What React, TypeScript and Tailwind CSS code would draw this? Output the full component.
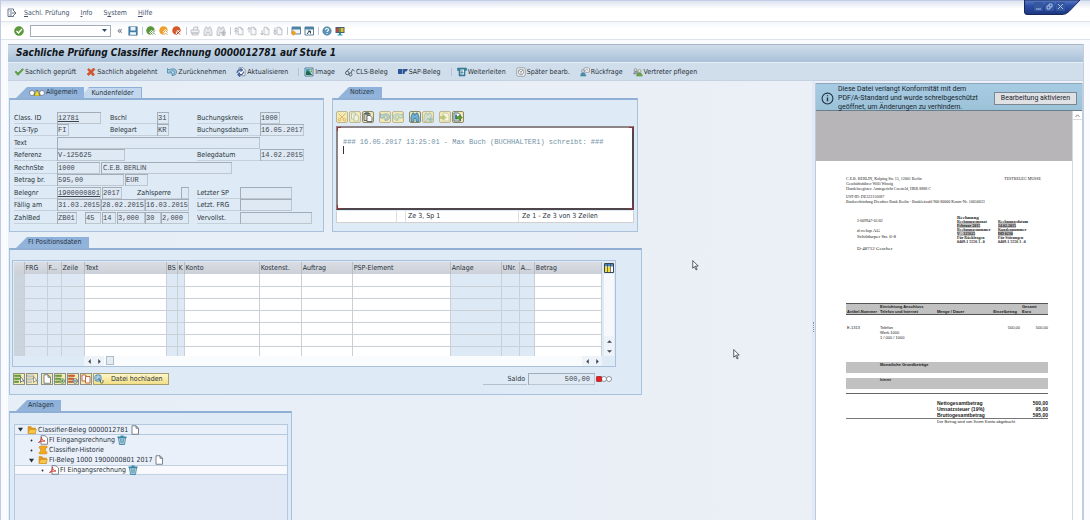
import React from "react";
import clsx from "clsx";

type IconName =
  | "exit" | "check" | "save" | "back" | "up" | "cancel" | "print" | "find" | "findNext"
  | "first" | "prev" | "next" | "last" | "newSession" | "shortcut" | "help" | "monitor"
  | "tick" | "cross" | "undo" | "redo" | "refresh" | "image" | "glasses" | "sap" | "forward"
  | "later" | "question" | "deputy" | "cut" | "copy" | "paste" | "search" | "searchNext" | "load"
  | "export" | "selectAll" | "deselect" | "page" | "insertRow" | "deleteRow" | "duplicate"
  | "upload" | "folder" | "pdf" | "history" | "trash" | "columns";

const pageShape = <path d="M4 1.5h8l5 5v12H4z M12 1.5v5h5" fill="#fff" stroke="#5b6570" strokeWidth="1.6" />;
const fadedPage = (
  <path d="M8 2.5h6l4 4v11H8z M14 2.5v4h4" fill="#f7f8f9" stroke="#b3b8bd" strokeWidth="1.6" />
);
const rowLines = <path d="M1 2h12v3H1zM1 8h10v3H1zM1 14h8v3H1z" />;
const binoculars = (
  <path d="M2 19V10l3-8h3l1 4h2l1-4h3l3 8v9h-6v-6H8v6z" strokeWidth="1.400" />
);

const ICONS: Record<IconName, React.ReactNode> = {
  exit: (
    <g fill="none" stroke="#56677c" strokeWidth="1.800">
      <path d="M13 6V2H2v15h11v-3" />
      <path d="M6 10h12M14 6l4 4-4 4M5 6h5M5 14h5" />
    </g>
  ),
  check: (
    <g>
      <circle cx="10" cy="10" r="9" fill="#5d9c3c" stroke="#48812d" />
      <path d="M5 10l4 4 7-8" fill="none" stroke="#fff" strokeWidth="2.800" />
    </g>
  ),
  save: (
    <g>
      <path d="M1.500 1.500h17v17h-17z" fill="#3e7fa8" stroke="#2d6489" />
      <path d="M5 2h10v7H5z" fill="#e8f1f7" />
      <path d="M4 12h12v6H4z" fill="#c3dbe9" />
      <path d="M5 14h10v2H5z" fill="#fff" />
    </g>
  ),
  back: (
    <g>
      <circle cx="9" cy="9" r="8.500" fill="#58963b" />
      <path d="M13 9l-4 4 4 4M18 9l-4 4 4 4" fill="none" stroke="#fff" strokeWidth="4" />
      <path d="M13 9l-4 4 4 4M18 9l-4 4 4 4" fill="none" stroke="#3f6d2b" strokeWidth="1.600" />
    </g>
  ),
  up: (
    <g>
      <circle cx="9" cy="9" r="8.500" fill="#efa02c" />
      <path d="M9 13l4-4 4 4M9 18l4-4 4 4" fill="none" stroke="#fff" strokeWidth="4" />
      <path d="M9 13l4-4 4 4M9 18l4-4 4 4" fill="none" stroke="#d5841c" strokeWidth="1.600" />
    </g>
  ),
  cancel: (
    <g>
      <circle cx="9" cy="9" r="8.500" fill="#d5582a" />
      <path d="M9 10l7 7M16 10l-7 7" stroke="#fff" strokeWidth="5" />
      <path d="M9 10l7 7M16 10l-7 7" stroke="#b8401b" strokeWidth="2" />
    </g>
  ),
  print: (
    <g fill="#f1f3f5" stroke="#b3b8bd" strokeWidth="1.600">
      <path d="M6 8l2-6h8l-2 6" />
      <path d="M2 8h16v6H2zM4 14h12v4H4z" />
    </g>
  ),
  find: <g fill="#e4e7ea" stroke="#b3b8bd">{binoculars}</g>,
  findNext: (
    <g fill="#e4e7ea" stroke="#b3b8bd">
      {binoculars}
      <path d="M15 9v9M10.500 13.500h9" strokeWidth="2.500" />
    </g>
  ),
  first: <g>{fadedPage}<path d="M4 17V4M1 7l3-4 3 4M1 12l3-4 3 4" fill="none" stroke="#b3b8bd" strokeWidth="1.800" /></g>,
  prev: <g>{fadedPage}<path d="M4 13V3M1 7l3-4 3 4" fill="none" stroke="#b3b8bd" strokeWidth="1.800" /></g>,
  next: <g>{fadedPage}<path d="M4 8v10M1 14l3 4 3-4" fill="none" stroke="#b3b8bd" strokeWidth="1.800" /></g>,
  last: <g>{fadedPage}<path d="M4 3v14M1 13l3 4 3-4M1 8l3 4 3-4" fill="none" stroke="#b3b8bd" strokeWidth="1.800" /></g>,
  newSession: (
    <g>
      <path d="M2 2h17v14H2z" fill="#eef4f8" stroke="#4b7692" strokeWidth="1.800" />
      <path d="M2 2h17v5H2z" fill="#4b83a6" />
      <path d="M5 9v10M0 14h10M2 11l6 6M8 11l-6 6" stroke="#f0a01f" strokeWidth="2.200" />
    </g>
  ),
  shortcut: (
    <g>
      <path d="M2 2h17v16H2z" fill="#fff" stroke="#4b7692" strokeWidth="1.800" />
      <path d="M2 2h17v5H2z" fill="#4b83a6" />
      <path d="M7 16c0-3 1-4 5-5M8 10h5v5" fill="none" stroke="#26333d" strokeWidth="1.800" />
    </g>
  ),
  help: (
    <g>
      <circle cx="10" cy="10" r="8.500" fill="#5b93b8" stroke="#3e7799" />
      <path d="M7 8c0-4 6-4 6 0 0 2-3 2-3 4M10 14v2" fill="none" stroke="#fff" strokeWidth="2.200" />
    </g>
  ),
  monitor: (
    <g>
      <path d="M1 2h18v12H1z" fill="#46606f" />
      <path d="M3 4h5v8H3z" fill="#c8463a" />
      <path d="M8 4h4v8H8z" fill="#53a154" />
      <path d="M12 4h5v8h-5z" fill="#e9bd35" />
      <path d="M8 14h4v3h3v2H5v-2h3z" fill="#2d9bb4" />
    </g>
  ),
  tick: <path d="M2 10l2-2 4 4 9-9 2 2L8 17z" fill="#5ba53c" stroke="#43862a" />,
  cross: <path d="M3 5l3-2 4 4 5-5 3 3-5 5 4 5-3 3-4-5-5 4-3-3 5-4z" fill="#d8532a" stroke="#b6401d" />,
  undo: (
    <path d="M1 3v9h9L7 9c3-2 8-2 8 1s-2 4-5 4v3c6 0 9-3 9-7 0-7-8-8-15-4z" fill="#9fc9e0" stroke="#39789d" strokeWidth="1.400" />
  ),
  redo: (
    <path d="M19 3v9h-9l3-3c-3-2-8-2-8 1s2 4 5 4v3c-6 0-9-3-9-7C1 3 9 2 16 6z" fill="#bcdcdc" stroke="#5f9dab" strokeWidth="1.400" />
  ),
  refresh: (
    <g>
      <path d="M6 1.500h8l4 4v12H6z" fill="#fff" stroke="#5b6f88" strokeWidth="1.400" />
      <path d="M2 12c0-5 4-7 8-6M9 3l4 3-4 3M15 9c0 5-3 7-8 6M8 12l-4 3 4 4" fill="none" stroke="#2e5391" strokeWidth="2.200" />
    </g>
  ),
  image: (
    <g>
      <path d="M2 2h16v16H2z" fill="#e6f0f5" stroke="#426f8b" strokeWidth="1.800" />
      <path d="M4 4h12v7H4z" fill="#3fa3c9" />
      <path d="M4 10l4-3 8 8v1H4z" fill="#1e6a45" />
      <circle cx="13" cy="7" r="2.200" fill="#f4d13d" />
    </g>
  ),
  glasses: (
    <g fill="none" stroke="#45505a" strokeWidth="1.700">
      <circle cx="4.500" cy="12" r="3.500" />
      <circle cx="11" cy="15" r="3" />
      <path d="M3 8l7-5M12 12l3-7 4 3M7 14l1 1" />
    </g>
  ),
  sap: <path d="M0 4h9v10H0zM10 4h10l-3 5h-3l-1 5h-3z" fill="#2b5796" />,
  forward: (
    <g>
      <path d="M1 2h18v5h-3v11H4V7H1z" fill="#3b829e" stroke="#2b6a84" />
      <path d="M7 5h7v10H7z" fill="#e6f1f6" />
      <path d="M10 6v6M8 10l2 3 3-3" fill="none" stroke="#2b6a84" strokeWidth="1.600" />
    </g>
  ),
  later: (
    <g fill="#f3f4f4" stroke="#7f878d" strokeWidth="1.400">
      <rect x="1.500" y="1.500" width="17" height="17" rx="3" />
      <circle cx="10" cy="10" r="5.500" />
      <path d="M5 6l5 4 5-5M10 10v4" fill="none" />
    </g>
  ),
  question: (
    <g>
      <rect x="8" y="1.500" width="11" height="9" rx="2" fill="#f2f4f5" stroke="#7f878d" strokeWidth="1.400" />
      <path d="M11 8c0-4 5-4 5-1" fill="none" stroke="#7f878d" strokeWidth="1.300" />
      <circle cx="6" cy="8" r="3" fill="#d7dde1" stroke="#5f7482" />
      <path d="M1 18l2-6h6l3 6z" fill="#4c8fb1" stroke="#3b7492" />
    </g>
  ),
  deputy: (
    <g>
      <circle cx="5" cy="6" r="3" fill="#cfd4d8" stroke="#6d777e" />
      <path d="M1 14l2-5h6l1 5z" fill="#9ba3a9" stroke="#6d777e" />
      <circle cx="13" cy="8" r="3" fill="#dfe5d8" stroke="#5e7b46" />
      <path d="M7 18l3-6h6l3 6z" fill="#70a848" stroke="#4f8232" />
    </g>
  ),
  cut: (
    <g fill="none" stroke="#d9952a" strokeWidth="2">
      <path d="M3 3l11 11M17 3L6 14" />
      <circle cx="5" cy="15.500" r="2.500" />
      <circle cx="15" cy="15.500" r="2.500" />
    </g>
  ),
  copy: (
    <g fill="#f6faf4" stroke="#7ba3a4" strokeWidth="1.600">
      <path d="M3 2h8v12H3z" />
      <path d="M8 6h6l3 3v9H8z" />
    </g>
  ),
  paste: (
    <g stroke="#4b5963" strokeWidth="1.700">
      <path d="M2 3h12v14H2z" fill="#d5cfb2" />
      <path d="M5 1.500h6v3H5z" fill="#68767f" />
      <path d="M8 7h6l4 4v8H8z" fill="#fff" />
    </g>
  ),
  search: <g fill="#6fb0d6" stroke="#2c6c96">{binoculars}</g>,
  searchNext: (
    <g fill="#c3dbe0" stroke="#6f9fae">
      {binoculars}
      <path d="M15 10v9M10.500 14.500h9" strokeWidth="2.500" />
    </g>
  ),
  load: (
    <g>
      <path d="M6 2h8l4 4v12H6z" fill="#fbfcf2" stroke="#a1a98d" strokeWidth="1.400" />
      <path d="M1 9h6V6l5 5-5 5v-3H1z" fill="#97bb55" stroke="#7a993f" />
    </g>
  ),
  export: (
    <g>
      <path d="M2 2h9l4 4v12H2z" fill="#fff" stroke="#3e627c" strokeWidth="1.800" />
      <path d="M4 5h4v10H4z" fill="#4484a8" />
      <path d="M7 9h5V6l7 5-7 6v-3H7z" fill="#5b9c3b" stroke="#3b7423" />
    </g>
  ),
  selectAll: (
    <g>
      <g fill="#62a83f" stroke="#44803a">{rowLines}</g>
      <path d="M13 5v12l3-3h4z" fill="#fff" stroke="#44525c" strokeWidth="1.400" />
    </g>
  ),
  deselect: (
    <g>
      <g fill="#e2e5e6" stroke="#8e969b">{rowLines}</g>
      <path d="M13 5v12l3-3h4z" fill="#fff" stroke="#6a747b" strokeWidth="1.400" />
    </g>
  ),
  page: pageShape,
  insertRow: (
    <g>
      <g fill="#72ab4c" stroke="#547f3d">{rowLines}</g>
      <circle cx="14.500" cy="14" r="4.500" fill="#fff" stroke="#3f7d2d" strokeWidth="1.500" />
      <path d="M14.500 11v6M11.500 14h6" stroke="#3f7d2d" strokeWidth="1.800" />
    </g>
  ),
  deleteRow: (
    <g>
      <g fill="#d9633c" stroke="#a3452f">{rowLines}</g>
      <circle cx="14.500" cy="14" r="4.500" fill="#fff" stroke="#3c464d" strokeWidth="1.500" />
      <path d="M11.500 14h6" stroke="#3c464d" strokeWidth="2" />
    </g>
  ),
  duplicate: (
    <g fill="#fff" stroke="#b9542f" strokeWidth="1.700">
      <path d="M2 2h8v12H2z" />
      <path d="M9 5h9v13H9z" />
    </g>
  ),
  upload: (
    <g>
      <circle cx="8" cy="8" r="7" fill="#6ba3c9" stroke="#35709b" />
      <path d="M1 6h14M1 10h14M8 1v14" stroke="#e3f0f8" strokeWidth="1.400" />
      <path d="M7 12c0-3 6-3 6 0v5c0 2 5 2 5-1v-4" fill="none" stroke="#4a6478" strokeWidth="1.800" />
    </g>
  ),
  folder: (
    <g stroke="#c98a17">
      <path d="M2 17V3h6l2 3h7v11z" fill="#e19a20" />
      <path d="M2 17l3-8h14l-3 8z" fill="#f8c64b" />
    </g>
  ),
  pdf: (
    <g>
      <path d="M6 1.500h8l5 4.500v12.500H6z" fill="#fff" stroke="#59636b" strokeWidth="1.500" />
      <path d="M1 15c5-2 6-7 6-11 0 5 3 8 7 8-5 0-9 1-13 3z" fill="none" stroke="#d0352a" strokeWidth="1.800" />
    </g>
  ),
  history: (
    <path d="M5 2h12c2 0 2 4 0 4h-2v7h2c2 0 2 5-1 5H4c-3 0-3-4 0-4h1V7H4C1 7 2 2 5 2z" fill="#f3a820" stroke="#c98315" />
  ),
  trash: (
    <g>
      <path d="M3 6h14l-2 13H5z" fill="#cfe5ee" stroke="#2c7797" strokeWidth="1.600" />
      <path d="M1 3h18v3H1zM7 1h6v2H7z" fill="#3987a6" />
      <path d="M7 8l1 9M10 8v9M13 8l-1 9" stroke="#2c7797" strokeWidth="1.400" />
    </g>
  ),
  columns: (
    <g>
      <path d="M1 1h18v18H1z" fill="#fff" stroke="#3a4650" strokeWidth="2" />
      <path d="M2 2h16v5H2z" fill="#4b86c0" />
      <path d="M2 7h10v11H2z" fill="#f5e13a" />
      <path d="M7 2v17M13 2v17" stroke="#3a4650" strokeWidth="1.400" />
    </g>
  ),
};

function Icon({ name, className }: { name: IconName; className?: string }) {
  return (
    <svg viewBox="0 0 20 20" className={clsx("size-[10px] shrink-0", className)} aria-hidden="true">
      {ICONS[name]}
    </svg>
  );
}

const MENUS = [
  { key: "S", rest: "achl. Prüfung" },
  { key: "I", rest: "nfo" },
  { pre: "S", key: "y", rest: "stem" },
  { key: "H", rest: "ilfe" },
];

const SYSTEM_GROUPS: { name: IconName; label: string }[][] = [
  [
    { name: "back", label: "Zurück" },
    { name: "up", label: "Beenden" },
    { name: "cancel", label: "Abbrechen" },
  ],
  [
    { name: "print", label: "Drucken" },
    { name: "find", label: "Suchen" },
    { name: "findNext", label: "Weitersuchen" },
  ],
  [
    { name: "first", label: "Erste Seite" },
    { name: "prev", label: "Vorige Seite" },
    { name: "next", label: "Nächste Seite" },
    { name: "last", label: "Letzte Seite" },
  ],
  [
    { name: "newSession", label: "Neuer Modus" },
    { name: "shortcut", label: "Verknüpfung" },
  ],
  [
    { name: "help", label: "Hilfe" },
    { name: "monitor", label: "Layout anpassen" },
  ],
];

const ACTION_GROUPS: { icon: IconName; label: string }[][] = [
  [
    { icon: "tick", label: "Sachlich geprüft" },
    { icon: "cross", label: "Sachlich abgelehnt" },
    { icon: "undo", label: "Zurücknehmen" },
    { icon: "refresh", label: "Aktualisieren" },
  ],
  [
    { icon: "image", label: "Image" },
    { icon: "glasses", label: "CLS-Beleg" },
    { icon: "sap", label: "SAP-Beleg" },
  ],
  [
    { icon: "forward", label: "Weiterleiten" },
    { icon: "later", label: "Später bearb." },
    { icon: "question", label: "Rückfrage" },
    { icon: "deputy", label: "Vertreter pflegen" },
  ],
];

const NOTE_TOOLS: { icon: IconName; label: string; off?: boolean }[][] = [
  [
    { icon: "cut", label: "Ausschneiden", off: true },
    { icon: "copy", label: "Kopieren", off: true },
    { icon: "paste", label: "Einfügen" },
  ],
  [
    { icon: "undo", label: "Rückgängig", off: true },
    { icon: "redo", label: "Wiederholen", off: true },
  ],
  [
    { icon: "search", label: "Suchen" },
    { icon: "searchNext", label: "Weitersuchen", off: true },
  ],
  [
    { icon: "load", label: "Laden", off: true },
    { icon: "export", label: "Sichern als" },
  ],
];

const ROW_TOOLS: { icon: IconName; label: string }[] = [
  { icon: "selectAll", label: "Alle markieren" },
  { icon: "deselect", label: "Markierung löschen" },
  { icon: "page", label: "Anlegen" },
  { icon: "insertRow", label: "Zeile einfügen" },
  { icon: "deleteRow", label: "Zeile löschen" },
  { icon: "duplicate", label: "Zeile kopieren" },
];

const COLUMNS = [
  { title: "", width: "w-[10px]", cell: "bg-[#cbd3dc]" },
  { title: "FRG", width: "w-[23px]", cell: "bg-[#dde8f4]" },
  { title: "F...", width: "w-[14px]", cell: "bg-[#dde8f4]" },
  { title: "Zeile", width: "w-[23px]", cell: "bg-[#dde8f4]" },
  { title: "Text", width: "w-[82px]", cell: "bg-white" },
  { title: "BS", width: "w-[11px]", cell: "bg-[#dde9f4]" },
  { title: "K", width: "w-[7px]", cell: "bg-[#dde9f4]" },
  { title: "Konto", width: "w-[75px]", cell: "bg-white" },
  { title: "Kostenst.", width: "w-[42px]", cell: "bg-white" },
  { title: "Auftrag", width: "w-[51px]", cell: "bg-white" },
  { title: "PSP-Element", width: "w-[98px]", cell: "bg-white" },
  { title: "Anlage", width: "w-[51px]", cell: "bg-[#dde9f4]" },
  { title: "UNr.", width: "w-[18px]", cell: "bg-[#dde9f4]" },
  { title: "A...", width: "w-[15px]", cell: "bg-[#dde9f4]" },
  { title: "Betrag", width: "w-[67px]", cell: "bg-white" },
];

const TREE: { text: string; icon: IconName; tail?: IconName; indent: string; open?: boolean; row?: string }[] = [
  { text: "Classifier-Beleg 0000012781", icon: "folder", tail: "page", indent: "pl-[3px]", open: true, row: "border-b border-[#b4c8de]" },
  { text: "FI Eingangsrechnung", icon: "pdf", tail: "trash", indent: "pl-[14px]" },
  { text: "Classifier-Historie", icon: "history", indent: "pl-[14px]" },
  { text: "FI-Beleg 1000 1900000801 2017", icon: "folder", tail: "page", indent: "pl-[14px]", open: true },
  { text: "FI Eingangsrechnung", icon: "pdf", tail: "trash", indent: "pl-[25px]", row: "border-y border-[#c2d1e2] bg-[#f7f9fd]" },
];

function Field({
  id,
  label,
  value = "",
  className,
}: {
  id?: string;
  label?: string;
  value?: string;
  className: string;
}) {
  return (
    <input
      id={id}
      aria-label={label}
      defaultValue={value}
      className={clsx(
        "h-[12px] shrink-0 bg-[#dfe9f3] pl-px font-['Liberation_Mono',monospace] text-[7px] leading-[12px] text-[#3c4650] outline-none",
        "shadow-[inset_1px_1px_0_#a3adb8,inset_-1px_-1px_0_#bcc6d0]",
        className
      )}
    />
  );
}

function Caption({ htmlFor, className, children }: { htmlFor: string; className: string; children: string }) {
  return (
    <label
      htmlFor={htmlFor}
      className={clsx("h-[12px] shrink-0 border-b border-[#c6d0db] leading-[12px]", className)}
    >
      {children}
    </label>
  );
}

function Lights({ state }: { state: "yellow" | "red" }) {
  return (
    <svg viewBox="0 0 32 12" className="h-[6px] w-4 shrink-0" aria-hidden="true">
      <circle cx="6" cy="6" r="5" fill="#fff" stroke="#535c64" strokeWidth="1.200" />
      <circle cx="16" cy="6" r="5" fill="#fff" stroke="#535c64" strokeWidth="1.200" />
      <circle cx="26" cy="6" r="5" fill="#fff" stroke="#535c64" strokeWidth="1.200" />
      {state === "yellow" && <path d="M16 0l6 12H10z" fill="#f5de2a" stroke="#4a4a20" />}
      {state === "red" && <path d="M1 1h10v10H1z" fill="#f21b1b" stroke="#7c1616" />}
    </svg>
  );
}

function Tab({ children, className }: { children: React.ReactNode; className?: string }) {
  return (
    <button
      type="button"
      className={clsx(
        "flex h-[11px] items-center gap-px bg-linear-to-b from-[#8db1dc] to-[#93b4da] leading-[11px] [clip-path:polygon(11px_0,100%_0,100%_100%,0_100%)]",
        className
      )}
    >
      {children}
    </button>
  );
}

const panelBox = "border border-t-2 border-[#a9c1da] border-t-[#8fafd4] bg-[#deeaf5]";

function WindowControls() {
  return (
    <div className="absolute top-0 right-[9px] h-[15px] w-[57px]">
      <svg viewBox="0 0 57 15" className="absolute inset-0 size-full" aria-hidden="true">
        <defs>
          <linearGradient id="caption" x1="0" y1="0" x2="0" y2="1">
            <stop offset="0" stopColor="#5d7cc6" />
            <stop offset="0.4" stopColor="#2c4fa6" />
            <stop offset="1" stopColor="#1d3680" />
          </linearGradient>
        </defs>
        <path d="M0.500 0v12q0 2.500 2.500 2.500h35q4 0 7-3L56 0z" fill="url(#caption)" stroke="#16285c" />
      </svg>
      <div className="relative flex gap-[2px] pt-[2px] pl-[10px] text-[#a8bfed]">
        {[
          { label: "Minimieren", d: "M2 7h5" },
          { label: "Wiederherstellen", d: "M2 4h3v3H2zM4 4V2h3v3H5" },
          { label: "Schließen", d: "M2 2l5 5M7 2l-5 5" },
        ].map((b) => (
          <button key={b.label} type="button" aria-label={b.label} className="size-[9px] rounded-[1px] bg-[#35589f]">
            <svg viewBox="0 0 9 9" className="size-[9px]" fill="none" stroke="currentColor">
              <path d={b.d} />
            </svg>
          </button>
        ))}
      </div>
    </div>
  );
}

function MenuBar() {
  return (
    <nav className="flex h-[22px] items-center gap-[11px] border-t border-b border-t-[#c3cfe4] border-b-[#dfe4ea] bg-linear-to-b from-[#dde3f1] to-white to-40% pt-1 pl-[6px] text-[#44536b]">
      <Icon name="exit" className="-mr-1" />
      {MENUS.map((m) => (
        <button key={m.rest} type="button">
          {m.pre}
          <span className="underline">{m.key}</span>
          {m.rest}
        </button>
      ))}
    </nav>
  );
}

function SystemToolbar() {
  return (
    <div className="flex h-[18px] items-center border-b border-[#dfe4ea] bg-linear-to-b from-[#f3f7fb] to-white to-40% pl-[13px]">
      <button type="button" aria-label="Weiter">
        <Icon name="check" />
      </button>
      <div className="ml-[6px] flex h-[12px] w-[81px] items-center border border-[#a2abb8] bg-white pr-[3px]">
        <select aria-label="Transaktion" className="h-full min-w-0 flex-1 appearance-none outline-none" defaultValue="">
          <option value=""></option>
        </select>
        <svg viewBox="0 0 10 6" className="h-[3px] w-[5px] shrink-0" aria-hidden="true">
          <path d="M0 0h10L5 6z" fill="#2c4a6b" />
        </svg>
      </div>
      <button type="button" aria-label="Befehlsfeld ausblenden" className="ml-[6px] text-[10px] leading-none text-[#49535d]">
        «
      </button>
      <button type="button" aria-label="Sichern" className="ml-[5px]">
        <Icon name="save" />
      </button>
      {SYSTEM_GROUPS.map((group, i) => (
        <div key={i} className="flex items-center gap-[3px] pl-[4px]">
          <span className="h-[8px] w-px shrink-0 bg-[#b9c9d9]" />
          {group.map((b) => (
            <button key={b.name} type="button" aria-label={b.label}>
              <Icon name={b.name} />
            </button>
          ))}
        </div>
      ))}
    </div>
  );
}

function ActionToolbar() {
  return (
    <div className="flex h-[19px] items-center gap-[10px] border-t border-b border-t-[#e6eef6] border-b-[#c5d0e2] bg-[#d0deeb] pl-[6px]">
      {ACTION_GROUPS.map((group, i) => (
        <React.Fragment key={i}>
          {i > 0 && <span className="-mr-[5px] h-[8px] w-px bg-[#b3c3d5]" />}
          {group.map((a) => (
            <button key={a.label} type="button" className="flex items-center gap-px whitespace-nowrap">
              <Icon name={a.icon} />
              {a.label}
            </button>
          ))}
        </React.Fragment>
      ))}
    </div>
  );
}

function GeneralPanel() {
  return (
    <section className="w-[315px] shrink-0">
      <div className="flex pl-[7px]">
        <Tab className="w-[68px] pl-[13px]">
          <Lights state="yellow" />
          Allgemein
        </Tab>
        <button
          type="button"
          className="h-[11px] w-[58px] border-t border-r border-[#8fb0d6] bg-[#c3d8ee] leading-[10px] [clip-path:polygon(5px_0,100%_0,100%_100%,0_100%,0_6px)]"
        >
          Kundenfelder
        </button>
      </div>
      <div className={clsx(panelBox, "h-[134px] pt-[12px] pl-[4px]")}>
        <div className="grid h-[112px] grid-rows-9">
          <div className="flex">
            <Caption htmlFor="class-id" className="w-[43px]">Class. ID</Caption>
            <Field id="class-id" value="12781" className="w-[44px] underline" />
            <Caption htmlFor="bschl" className="ml-[9px] w-[47px]">Bschl</Caption>
            <Field id="bschl" value="31" className="w-[12px]" />
            <Caption htmlFor="bukrs" className="ml-[28px] w-[63px]">Buchungskreis</Caption>
            <Field id="bukrs" value="1000" className="w-[20px]" />
          </div>
          <div className="flex">
            <Caption htmlFor="cls-typ" className="w-[43px]">CLS-Typ</Caption>
            <Field id="cls-typ" value="FI" className="w-[12px]" />
            <Caption htmlFor="belegart" className="ml-[41px] w-[47px]">Belegart</Caption>
            <Field id="belegart" value="KR" className="w-[12px]" />
            <Caption htmlFor="budat" className="ml-[28px] w-[63px]">Buchungsdatum</Caption>
            <Field id="budat" value="16.05.2017" className="w-[44px]" />
          </div>
          <div className="flex">
            <Caption htmlFor="text" className="w-[43px]">Text</Caption>
            <Field id="text" className="w-[203px]" />
          </div>
          <div className="flex">
            <Caption htmlFor="referenz" className="w-[43px]">Referenz</Caption>
            <Field id="referenz" value="V-125625" className="w-[68px]" />
            <Caption htmlFor="bldat" className="ml-[72px] w-[63px]">Belegdatum</Caption>
            <Field id="bldat" value="14.02.2015" className="w-[44px]" />
          </div>
          <div className="flex">
            <Caption htmlFor="rechnste" className="w-[43px]">RechnSte</Caption>
            <Field id="rechnste" value="1000" className="w-[43px]" />
            <input
              aria-label="Name Rechnungssteller"
              defaultValue="C.E.B. BERLIN"
              className="ml-px h-[12px] w-[131px] bg-[#dfe9f3] pl-[2px] leading-[12px] text-[#3c4650] shadow-[inset_1px_1px_0_#a3adb8,inset_-1px_-1px_0_#bcc6d0] outline-none"
            />
          </div>
          <div className="flex gap-px">
            <Caption htmlFor="betrag" className="-mr-px w-[43px]">Betrag br.</Caption>
            <Field id="betrag" value="595,00" className="w-[67px]" />
            <Field label="Währung" value="EUR" className="w-[23px]" />
          </div>
          <div className="flex">
            <Caption htmlFor="belegnr" className="w-[43px]">Belegnr</Caption>
            <Field id="belegnr" value="1900000801" className="w-[44px] underline" />
            <Field label="Geschäftsjahr" value="2017" className="ml-px w-[20px]" />
            <Caption htmlFor="sperre" className="ml-[15px] w-[44px]">Zahlsperre</Caption>
            <Field id="sperre" className="w-[8px]" />
            <Caption htmlFor="letzter-sp" className="ml-[8px] w-[43px]">Letzter SP</Caption>
            <Field id="letzter-sp" className="w-[52px]" />
          </div>
          <div className="flex">
            <Caption htmlFor="faellig" className="w-[43px]">Fällig am</Caption>
            <Field id="faellig" value="31.03.2015" className="w-[44px]" />
            <Field label="Skonto 1 bis" value="28.02.2015" className="w-[44px]" />
            <Field label="Skonto 2 bis" value="16.03.2015" className="w-[44px]" />
            <Caption htmlFor="letzt-frg" className="ml-[8px] w-[43px]">Letzt. FRG</Caption>
            <Field id="letzt-frg" className="w-[52px]" />
          </div>
          <div className="flex">
            <Caption htmlFor="zahlbed" className="w-[43px]">ZahlBed</Caption>
            <Field id="zahlbed" value="ZB01" className="w-[20px]" />
            <Field label="Tage 1" value="45" className="ml-2 w-[16px] pl-[3px]" />
            <Field label="Tage 2" value="14" className="ml-px w-[14px] pl-[3px]" />
            <Field label="Prozent 1" value="3,000" className="ml-px w-[28px] pl-[3px]" />
            <Field label="Tage netto" value="30" className="w-[16px] pl-[3px]" />
            <Field label="Prozent 2" value="2,000" className="w-[28px] pl-[3px]" />
            <Caption htmlFor="vervollst" className="ml-[8px] w-[43px]">Vervollst.</Caption>
            <Field id="vervollst" className="w-[72px]" />
          </div>
        </div>
      </div>
    </section>
  );
}

function NotesPanel() {
  return (
    <section className="w-[306px] shrink-0">
      <div className="flex pl-[6px]">
        <Tab className="w-[44px] pl-[12px]">Notizen</Tab>
      </div>
      <div className={clsx(panelBox, "h-[134px] px-[3px] pt-[11px]")}>
        <div className="flex gap-[5px]">
          {NOTE_TOOLS.map((group, i) => (
            <div key={i} className="flex gap-px">
              {group.map((t) => (
                <button
                  key={t.label}
                  type="button"
                  aria-label={t.label}
                  className={clsx(
                    "flex size-[12px] items-center justify-center rounded-[2px] border bg-[#f2e9b5]",
                    t.off ? "border-[#bdb794]" : "border-[#8f8963]"
                  )}
                >
                  <Icon name={t.icon} className={t.off ? "opacity-60" : undefined} />
                </button>
              ))}
            </div>
          ))}
        </div>
        <div className="relative mt-[3px]">
          <textarea
            aria-label="Notizen"
            readOnly
            value={"\n### 16.05.2017 13:25:01 - Max Buch (BUCHHALTER1) schreibt: ###\n"}
            className="block h-[84px] w-full resize-none overflow-hidden border-2 border-[#8b8588] border-r-[#4e464a] border-b-[#4e464a] bg-white px-[5px] py-[1px] font-['Liberation_Mono',monospace] text-[7px] leading-[9px] text-[#7392a5] outline-none"
          />
          <span className="absolute top-[20px] left-[7px] h-[8px] w-px bg-[#333]" />
          <span className="absolute top-px left-px size-[4px] border-t border-l border-[#9d2f36]" />
          <span className="absolute top-px right-px size-[4px] border-t border-r border-[#9d2f36]" />
          <span className="absolute bottom-px left-px size-[4px] border-b border-l border-[#9d2f36]" />
          <span className="absolute right-px bottom-px size-[4px] border-r border-b border-[#9d2f36]" />
        </div>
        <div className="mt-px flex h-[12px] border border-t-0 border-[#d3cfcf] bg-white leading-[11px]">
          <span className="w-[60px] border-r border-[#dcdfe3]" />
          <span className="w-[9px] border-r border-[#dcdfe3]" />
          <span className="w-[113px] border-r border-[#dcdfe3] pl-[2px]">Ze 3, Sp 1</span>
          <span className="pl-[3px]">Ze 1 - Ze 3 von 3 Zeilen</span>
        </div>
      </div>
    </section>
  );
}

function Arrow({ d, label }: { d: string; label: string }) {
  return (
    <button type="button" aria-label={label} className="flex size-[10px] items-center justify-center bg-[#eef3f9]">
      <svg viewBox="0 0 8 8" className="size-[5px]" aria-hidden="true">
        <path d={d} fill="#3c4650" />
      </svg>
    </button>
  );
}

function PositionsPanel() {
  return (
    <section className="mt-[5px] w-[633px]">
      <div className="flex pl-[7px]">
        <Tab className="w-[73px] pl-[12px]">FI Positionsdaten</Tab>
      </div>
      <div className={clsx(panelBox, "h-[147px] pt-[10px] pl-[2px]")}>
        <div className="w-[604px] border border-[#a9c1da] p-px pb-0">
          <div className="flex">
            <table className="w-[588px] table-fixed border-collapse">
              <thead>
                <tr className="h-[12px] bg-linear-to-b from-[#dadde3] to-[#ccd0d8]">
                  {COLUMNS.map((c, i) => (
                    <th
                      key={i}
                      className={clsx(
                        "overflow-hidden border-r border-[#b6bec8] p-0 pl-px text-left leading-[11px] font-normal whitespace-nowrap",
                        c.width
                      )}
                    >
                      {c.title}
                    </th>
                  ))}
                </tr>
              </thead>
              <tbody>
                {Array.from({ length: 7 }, (_, r) => (
                  <tr key={r} className={r < 6 ? "h-[12px]" : "h-[10px]"}>
                    {COLUMNS.map((c, i) => (
                      <td key={i} className={clsx("border-r border-[#c9d0d8] p-0", r < 6 && "border-b", c.cell)} />
                    ))}
                  </tr>
                ))}
              </tbody>
            </table>
            <div className="ml-[2px] flex w-[10px] flex-col">
              <button type="button" aria-label="Spalten einstellen" className="h-[12px]">
                <Icon name="columns" />
              </button>
              <div className="flex-1 bg-[#f6f8fb]" />
              <Arrow label="Nach oben" d="M0 6h8L4 2z" />
              <Arrow label="Nach unten" d="M0 2h8L4 6z" />
            </div>
          </div>
          <div className="flex h-[10px] w-[588px] bg-linear-to-r from-[#deeaf5] from-12% to-[#f9fbfd] to-12% pl-[70px]">
            <Arrow label="Spalte links" d="M6 0v8L2 4z" />
            <Arrow label="Spalte rechts" d="M2 0v8l4-4z" />
            <span className="ml-[2px] h-[9px] w-[8px] border border-[#aebccb] bg-[#e4ecf4]" />
            <span className="flex-1" />
            <Arrow label="Seite links" d="M6 0v8L2 4z" />
            <Arrow label="Seite rechts" d="M2 0v8l4-4z" />
          </div>
        </div>
        <div className="mt-[6px] flex items-center gap-px pl-px">
          {ROW_TOOLS.map((t) => (
            <button
              key={t.icon}
              type="button"
              aria-label={t.label}
              className={clsx(
                "flex size-[12px] items-center justify-center border border-[#8f9184] bg-[#f5ebb0]",
                t.icon === "page" && "ml-[2px]"
              )}
            >
              <Icon name={t.icon} />
            </button>
          ))}
          <button
            type="button"
            className="flex h-[12px] w-[76px] items-center border border-[#a89f70] bg-linear-to-b from-[#fdf6c8] to-[#f3df86] leading-[10px] whitespace-nowrap"
          >
            <Icon name="upload" />
            <span className="ml-[7px]">Datei hochladen</span>
          </button>
          <label htmlFor="saldo" className="ml-[313px] h-[12px] w-[44px] border-b border-[#b5c0cc] pr-[2px] text-right leading-[12px]">
            Saldo
          </label>
          <Field id="saldo" value="500,00" className="w-[67px] pr-[5px] text-right" />
          <Lights state="red" />
        </div>
      </div>
    </section>
  );
}

function AttachmentsPanel() {
  return (
    <section className="mt-[5px] flex w-[283px] flex-1 flex-col">
      <div className="flex pl-[7px]">
        <Tab className="w-[45px] pl-[12px]">Anlagen</Tab>
      </div>
      <div className={clsx(panelBox, "flex flex-1 flex-col border-b-0 pt-[11px] pr-[3px] pl-[4px]")}>
        <ul className="flex-1 border border-b-0 border-[#b4c8de] bg-linear-to-b from-[#eaf0fa] from-50% to-[#e1e9f6] to-50%">
          {TREE.map((n, i) => (
            <li key={i} className={clsx("flex h-[10px] items-center gap-px", n.indent, n.row)}>
              <svg viewBox="0 0 8 8" className="mr-[3px] size-[5px] shrink-0" aria-hidden="true">
                {n.open ? <path d="M0 1h8L4 7z" fill="#222b33" /> : <circle cx="4" cy="4" r="1.500" fill="#222b33" />}
              </svg>
              <Icon name={n.icon} />
              <span>{n.text}</span>
              {n.tail && <Icon name={n.tail} className="ml-px" />}
            </li>
          ))}
        </ul>
      </div>
    </section>
  );
}

function InvoiceMeta({ rows }: { rows: string[] }) {
  return (
    <dl className="text-[4px] leading-[4px] font-bold">
      {rows.map((r, i) =>
        i % 2 === 0 ? (
          <dt key={i}>{r}</dt>
        ) : (
          <dd key={i}>
            <span className={i < 5 ? "bg-[#bdbdbd]" : ""}>{r}</span>
          </dd>
        )
      )}
    </dl>
  );
}

function Invoice() {
  return (
    <article className="flex-1 bg-white pt-[15px] pr-[24px] pl-[30px] font-['Liberation_Serif',serif] text-[4px] leading-[5px] text-[#222]">
      <header className="flex justify-between pr-[7px]">
        <div className="whitespace-nowrap">
          <p>C.E.B. BERLIN, Kolping Str. 15, 12001 Berlin</p>
          <p>Geschäftsführer Willi Winzig</p>
          <p>Handelsregister: Amtsgericht Coesfeld, HRB 8888 C</p>
          <p className="mt-[3px]">UST-ID: DE322156687</p>
          <p>Bankverbindung Dresdner Bank Berlin - Bankleitzahl 900 80000 Konto-Nr. 10050033</p>
        </div>
        <p>TESTBELEG MUSSE</p>
      </header>
      <div className="mt-[11px] flex">
        <address className="w-[111px] pt-[3px] pl-[11px] text-[5px] leading-[6px] not-italic">
          <p className="mb-[5px] text-[4px] leading-[5px]">2-009947-01/02</p>
          <p>d.velop AG</p>
          <p>Schildarper Str. 6-8</p>
          <p className="mt-[6px]">D-48712 Gescher</p>
        </address>
        <div>
          <h2 className="text-[5px] leading-[5px] font-bold">Rechnung</h2>
          <div className="flex">
            <div className="w-[41px]">
              <InvoiceMeta rows={["Rechnungsmonat", "Februar 2015", "Rechnungsnummer", "V - 125625", "Für Rückfragen", "0409-1 5556 1 -0"]} />
            </div>
            <InvoiceMeta rows={["Rechnungsdatum", "14.02.2015", "Kundennummer", "DD 0230", "Für Störungen", "0409-1 5556 1 -0"]} />
          </div>
        </div>
      </div>
      <div className="mt-[51px] font-['Liberation_Sans',sans-serif]">
        <table className="w-full table-fixed border-collapse text-left align-top">
          <thead>
            <tr className="border-y border-[#555] bg-[#c1c1c1] align-bottom">
              <th className="w-[34px] p-0 pl-px whitespace-nowrap">Artikel-Nummer</th>
              <th className="w-[57px] p-0 whitespace-nowrap">
                Einrichtung Anschluss
                <br />
                Telefon und Internet
              </th>
              <th className="p-0">Menge / Dauer</th>
              <th className="w-[30px] p-0 pr-[3px] text-right">Einzelbetrag</th>
              <th className="w-[28px] p-0 pl-[2px]">
                Gesamt
                <br />
                Euro
              </th>
            </tr>
          </thead>
          <tbody>
            <tr className="align-top">
              <td className="p-0 pt-[10px] pl-px">E-1313</td>
              <td className="p-0 pt-[10px]">
                Telefon
                <br />
                Werk 1000
                <br />
                1 / 000 / 1000
              </td>
              <td className="p-0" />
              <td className="p-0 pt-[10px] text-right">500,00</td>
              <td className="p-0 pt-[10px] text-right">500,00</td>
            </tr>
          </tbody>
        </table>
        <h3 className="mt-[22px] h-[11px] bg-[#c1c1c1] pl-[34px] font-bold">Monatliche Grundbeträge</h3>
        <h3 className="mt-[5px] h-[11px] bg-[#c1c1c1] pl-[34px] text-[3px] font-bold">Internet</h3>
        <dl className="mt-1 grid grid-cols-[1fr_auto] border-t border-b border-t-[#666] border-b-[#777] pt-[6px] pl-[91px] text-[5px] leading-[6px] font-bold">
          <dt>Nettogesamtbetrag</dt>
          <dd>500,00</dd>
          <dt>Umsatzsteuer (19%)</dt>
          <dd className="text-right">95,00</dd>
          <dt>Bruttogesamtbetrag</dt>
          <dd>595,00</dd>
        </dl>
        <p className="pl-[91px] whitespace-nowrap">Der Betrag wird von Ihrem Konto abgebucht</p>
      </div>
    </article>
  );
}

function PdfViewer() {
  return (
    <aside className="mt-[2px] flex w-[268px] shrink-0 flex-col border-r border-l border-r-[#c3cde0] border-l-[#bccbdb] bg-white">
      <div className="flex h-[28px] items-center border-y border-t-[#8ba9bd] border-b-[#697f8d] bg-linear-to-b from-[#a7cbe3] to-[#9cc2d8] pt-[2px] pr-[5px] pl-[5px] font-['Roboto',sans-serif] text-[#17242e]">
        <svg viewBox="0 0 24 24" className="size-[13px] shrink-0" fill="none" stroke="#1f3544" strokeWidth="2" aria-hidden="true">
          <circle cx="12" cy="12" r="10" />
          <path d="M12 10v7M12 6v2" strokeWidth="2.600" />
        </svg>
        <p className="ml-[4px] flex-1 leading-[9px] whitespace-nowrap">
          Diese Datei verlangt Konformität mit dem
          <br />
          PDF/A-Standard und wurde schreibgeschützt
          <br />
          geöffnet, um Änderungen zu verhindern.
        </p>
        <button type="button" className="h-[13px] w-[83px] border border-[#7b8790] bg-[#dfe1e4] leading-[11px] whitespace-nowrap">
          Bearbeitung aktivieren
        </button>
      </div>
      <div className="flex flex-1">
        <div className="flex flex-1 flex-col border-r border-[#d5d7dc]">
          <div className="h-[50px] bg-[#b7b5b8]" />
          <Invoice />
        </div>
        <div className="w-[9px] bg-white">
          <button type="button" aria-label="Nach oben blättern" className="flex h-[9px] w-full items-center justify-center border-b border-[#d7d9dd]">
            <svg viewBox="0 0 8 8" className="size-[5px]" fill="none" stroke="#666" aria-hidden="true">
              <path d="M1 6l3-3 3 3" strokeWidth="1.400" />
            </svg>
          </button>
        </div>
      </div>
    </aside>
  );
}

function Pointer({ className }: { className: string }) {
  return (
    <svg viewBox="0 0 12 20" className={clsx("absolute h-[11px] w-[7px]", className)} aria-hidden="true">
      <path d="M1 1v14l3-3 3 6 2-1-3-6h5z" fill="#fff" stroke="#2d3136" strokeWidth="1.400" />
    </svg>
  );
}

export default function App() {
  return (
    <div className="relative flex min-h-screen flex-col border-l border-[#c3cbe0] bg-[#fafbfe] font-['DejaVu_Sans_Condensed','DejaVu_Sans',sans-serif] text-[7px] leading-[10px] text-[#29323b]">
      <MenuBar />
      <SystemToolbar />
      <WindowControls />
      <main className="mt-[4px] mr-[6px] ml-[7px] flex flex-1 flex-col border-r border-[#c3cde0]">
        <h1 className="h-[18px] border-t border-[#a9b6c8] bg-linear-to-b from-[#cfdcea] to-[#a9c1d9] pl-[8px] text-[10px] leading-[16px] font-bold text-[#10151a] italic">
          Sachliche Prüfung Classifier Rechnung 0000012781 auf Stufe 1
        </h1>
        <ActionToolbar />
        <div className="flex flex-1 bg-linear-to-r from-[#e6eef6] to-[#edf0f6]">
          <div className="flex flex-1 flex-col pt-[6px] pl-px">
            <div className="flex gap-[8px]">
              <GeneralPanel />
              <NotesPanel />
            </div>
            <PositionsPanel />
            <AttachmentsPanel />
          </div>
          <div className="flex w-[3px] items-center justify-center bg-[#e2e9f4] pt-[52px]">
            <span className="h-[10px] border-l border-dotted border-[#8693a3]" />
          </div>
          <PdfViewer />
        </div>
      </main>
      <Pointer className="top-[260px] left-[691px]" />
      <Pointer className="top-[349px] left-[732px]" />
    </div>
  );
}
